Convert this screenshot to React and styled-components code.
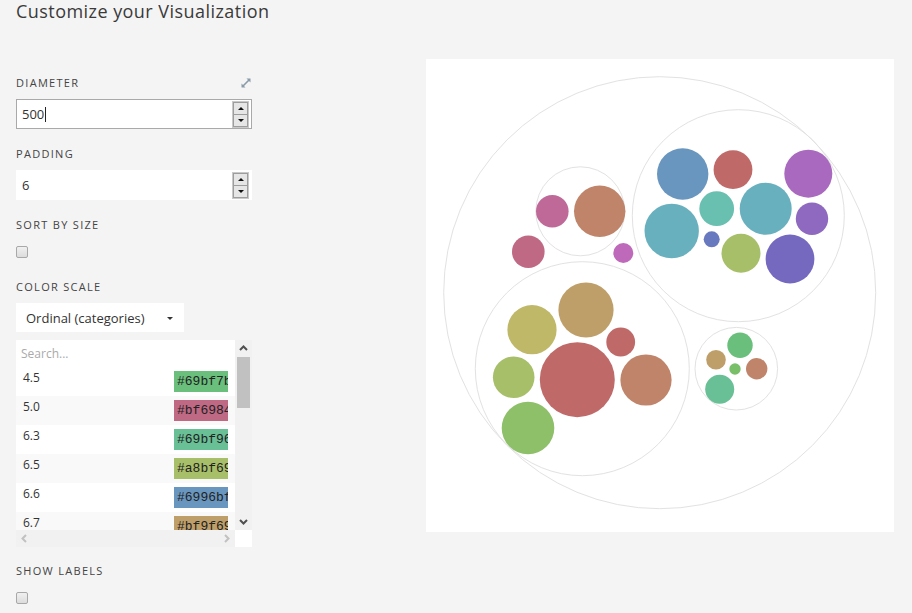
import React from 'react';
import styled, { createGlobalStyle } from 'styled-components';

const GlobalStyle = createGlobalStyle`
  body {
    margin: 0;
    background: #f4f4f4;
    font-family: "Open Sans", "Liberation Sans", sans-serif;
    color: #333;
  }
`;

// Layout
const Page = styled.div`
  width: 912px;
  height: 613px;
  overflow: hidden;
`;

const Title = styled.h1`
  margin: 0;
  padding-left: 16px;
  font-size: 18px;
  font-weight: 400;
  line-height: 22px;
  color: #3a3a3a;
  letter-spacing: 0.45px;
`;

const Body = styled.div`
  display: flex;
  align-items: flex-start;
`;

const Controls = styled.div`
  width: 236px;
  padding: 54px 0 0 16px;
  display: flex;
  flex-direction: column;
`;

const LabelRow = styled.div`
  display: flex;
  justify-content: space-between;
  align-items: center;
  margin-top: ${(p) => p.$gap || 0}px;
`;

const Label = styled.div`
  font-size: 11px;
  line-height: 14px;
  letter-spacing: 1.3px;
  text-transform: uppercase;
  color: #444;
`;

// Number inputs
const NumberBox = styled.div`
  margin-top: 9px;
  height: 30px;
  box-sizing: border-box;
  display: flex;
  align-items: center;
  background: #fff;
  border: 1px solid ${(p) => (p.$focused ? '#a9a9a9' : '#fff')};
  padding-right: 1px;
`;

const FieldText = styled.div`
  flex: 1;
  display: flex;
  align-items: center;
  font-size: 13px;
  color: #333;
  padding-left: 5px;
`;

const Caret = styled.span`
  display: inline-block;
  width: 1px;
  height: 15px;
  background: #222;
  margin-left: 1px;
`;

const Spinner = styled.div`
  display: flex;
  flex-direction: column;
  border: 1px solid #c9c9c9;
  margin-right: 1px;
`;

const SpinButton = styled.div`
  width: 13px;
  height: 11px;
  background: #e6e6e6;
  border: 1px solid #9d9d9d;
  display: flex;
  align-items: center;
  justify-content: center;
  & + & {
    border-top: none;
  }
`;

const Tri = styled.span`
  width: 0;
  height: 0;
  border-left: 3px solid transparent;
  border-right: 3px solid transparent;
  ${(p) => (p.$up ? 'border-bottom: 3px solid #111;' : 'border-top: 3px solid #111;')}
`;

// Checkbox
const Check = styled.div`
  margin-top: 14px;
  width: 10px;
  height: 10px;
  border: 1px solid #a8a8a8;
  border-radius: 2px;
  background: linear-gradient(#f0f0f0, #dcdcdc);
`;

// Select
const Select = styled.div`
  margin-top: 9px;
  width: 168px;
  height: 29px;
  background: #fff;
  display: flex;
  align-items: center;
  justify-content: space-between;
  box-sizing: border-box;
  padding: 0 11px 0 10px;
  font-size: 13px;
  color: #333;
`;

const SelectCaret = styled.span`
  width: 0;
  height: 0;
  margin-top: 2px;
  border-left: 3px solid transparent;
  border-right: 3px solid transparent;
  border-top: 3px solid #333;
`;

// Color list
const ListBox = styled.div`
  margin-top: 8px;
  width: 236px;
  display: grid;
  grid-template-columns: 219px 17px;
  grid-template-rows: 190px 17px;
  background: #fff;
`;

const ListViewport = styled.div`
  overflow: hidden;
  display: flex;
  flex-direction: column;
`;

const Search = styled.div`
  flex: none;
  height: 27px;
  padding-left: 5px;
  display: flex;
  align-items: center;
  font-size: 12px;
  color: #aaa;
`;

const Row = styled.div`
  flex: none;
  height: 29px;
  box-sizing: border-box;
  display: flex;
  justify-content: space-between;
  align-items: flex-start;
  padding: 0 7px 0 7px;
  background: ${(p) => (p.$alt ? '#f9f9f9' : '#fff')};
`;

const RowValue = styled.span`
  font-size: 12px;
  line-height: 14px;
  margin-top: 4px;
  color: #333;
`;

const Swatch = styled.span`
  margin-top: 4px;
  width: 54px;
  height: 21px;
  box-sizing: border-box;
  overflow: hidden;
  white-space: nowrap;
  padding-left: 3px;
  font-family: "Liberation Mono", monospace;
  font-size: 13px;
  line-height: 22px;
  color: #222;
  background: ${(p) => p.$color};
`;

const VScroll = styled.div`
  background: #f1f1f1;
  display: flex;
  flex-direction: column;
`;

const ScrollArrow = styled.div`
  height: 17px;
  width: ${(p) => (p.$h ? '17px' : 'auto')};
  display: flex;
  align-items: center;
  justify-content: center;
  flex: none;
`;

const Thumb = styled.div`
  margin: 0 2px;
  height: 51px;
  background: #c1c1c1;
`;

const Track = styled.div`
  flex: 1;
`;

const HScroll = styled.div`
  background: #f1f1f1;
  display: flex;
  justify-content: space-between;
  align-items: center;
`;

const Corner = styled.div`
  background: #fff;
`;

// Chart
const ChartPanel = styled.div`
  margin: 37px 0 0 174px;
  width: 468px;
  height: 473px;
  background: #fff;
`;

const Chevron = ({ dir, color }) => {
  const pts = {
    up: '1,6 4.5,2.5 8,6',
    down: '1,3 4.5,6.5 8,3',
    left: '6,1 2.5,4.5 6,8',
    right: '3,1 6.5,4.5 3,8',
  }[dir];
  return (
    <svg width="9" height="9" viewBox="0 0 9 9">
      <polyline points={pts} fill="none" stroke={color} strokeWidth="2" />
    </svg>
  );
};

const ExpandIcon = () => (
  <svg width="12" height="12" viewBox="0 0 12 12">
    <line x1="2.5" y1="9.5" x2="9.5" y2="2.5" stroke="#8a9aa8" strokeWidth="1.6" />
    <polygon points="6.5,1.5 10.5,1.5 10.5,5.5" fill="#8a9aa8" />
    <polygon points="1.5,6.5 1.5,10.5 5.5,10.5" fill="#8a9aa8" />
  </svg>
);

const rows = [
  ['4.5', '#69bf7b'],
  ['5.0', '#bf6984'],
  ['6.3', '#69bf96'],
  ['6.5', '#a8bf69'],
  ['6.6', '#6996bf'],
  ['6.7', '#bf9f69'],
];

const groups = [
  [659.7, 292.7, 216],
  [738.3, 215.7, 106],
  [580.3, 211.3, 44.5],
  [582.3, 368.7, 107],
  [736.3, 368.7, 41.3],
];

const leaves = [
  [682.7, 174, 25.7, '#6996bf'],
  [733, 169.7, 19.4, '#bf6969'],
  [808.3, 173.7, 24, '#a969bf'],
  [716.7, 208.7, 17.4, '#69bfb0'],
  [765.7, 208.7, 26, '#69b0bf'],
  [812, 218.7, 16.2, '#8e69bf'],
  [671.7, 231, 27.2, '#69b0bf'],
  [711.7, 239.3, 8, '#6979bf'],
  [741, 253.3, 19.5, '#a8bf69'],
  [790, 259, 24.4, '#7469bf'],
  [552.3, 211.3, 16.3, '#bf6999'],
  [599.7, 211.3, 25.7, '#bf8469'],
  [528.3, 251.7, 16.3, '#bf6984'],
  [623.3, 253, 10, '#bf69bb'],
  [586, 310, 27.6, '#bf9f69'],
  [532, 329.7, 24.6, '#bfb869'],
  [620.7, 342, 14.4, '#bf6969'],
  [577.3, 379.7, 37.5, '#bf6969'],
  [513.7, 377.3, 20.8, '#a8bf69'],
  [646, 380, 25.6, '#bf8469'],
  [528, 428, 26.3, '#8ebf69'],
  [740, 345.3, 12.7, '#69bf7b'],
  [716, 359.7, 9.8, '#bf9f69'],
  [735, 369, 5.7, '#79bf69'],
  [756.7, 368.7, 10.7, '#bf8469'],
  [719.7, 389.3, 14.5, '#69bf96'],
];

const NumberInput = ({ value, focused }) => (
  <NumberBox $focused={focused}>
    <FieldText>
      {value}
      {focused && <Caret />}
    </FieldText>
    <Spinner>
      <SpinButton><Tri $up /></SpinButton>
      <SpinButton><Tri /></SpinButton>
    </Spinner>
  </NumberBox>
);

const App = () => (
  <Page>
    <GlobalStyle />
    <Title>Customize your Visualization</Title>
    <Body>
      <Controls>
        <LabelRow>
          <Label>Diameter</Label>
          <ExpandIcon />
        </LabelRow>
        <NumberInput value="500" focused />
        <LabelRow $gap={18}><Label>Padding</Label></LabelRow>
        <NumberInput value="6" />
        <LabelRow $gap={18}><Label>Sort by size</Label></LabelRow>
        <Check />
        <LabelRow $gap={22}><Label>Color scale</Label></LabelRow>
        <Select>
          <span>Ordinal (categories)</span>
          <SelectCaret />
        </Select>
        <ListBox>
          <ListViewport>
            <Search>Search...</Search>
            {rows.map(([v, c], i) => (
              <Row key={v} $alt={i % 2 === 1}>
                <RowValue>{v}</RowValue>
                <Swatch $color={c}>{c}</Swatch>
              </Row>
            ))}
          </ListViewport>
          <VScroll>
            <ScrollArrow><Chevron dir="up" color="#505050" /></ScrollArrow>
            <Thumb />
            <Track />
            <ScrollArrow><Chevron dir="down" color="#505050" /></ScrollArrow>
          </VScroll>
          <HScroll>
            <ScrollArrow $h><Chevron dir="left" color="#c1c1c1" /></ScrollArrow>
            <ScrollArrow $h><Chevron dir="right" color="#c1c1c1" /></ScrollArrow>
          </HScroll>
          <Corner />
        </ListBox>
        <LabelRow $gap={17}><Label>Show labels</Label></LabelRow>
        <Check />
      </Controls>
      <ChartPanel>
        <svg width="468" height="473" viewBox="426 59 468 473">
          {groups.map(([x, y, r], i) => (
            <circle key={'g' + i} cx={x} cy={y} r={r} fill="none" stroke="#e2e2e2" strokeWidth="1" />
          ))}
          {leaves.map(([x, y, r, c], i) => (
            <circle key={'l' + i} cx={x} cy={y} r={r} fill={c} />
          ))}
        </svg>
      </ChartPanel>
    </Body>
  </Page>
);

export default App;
